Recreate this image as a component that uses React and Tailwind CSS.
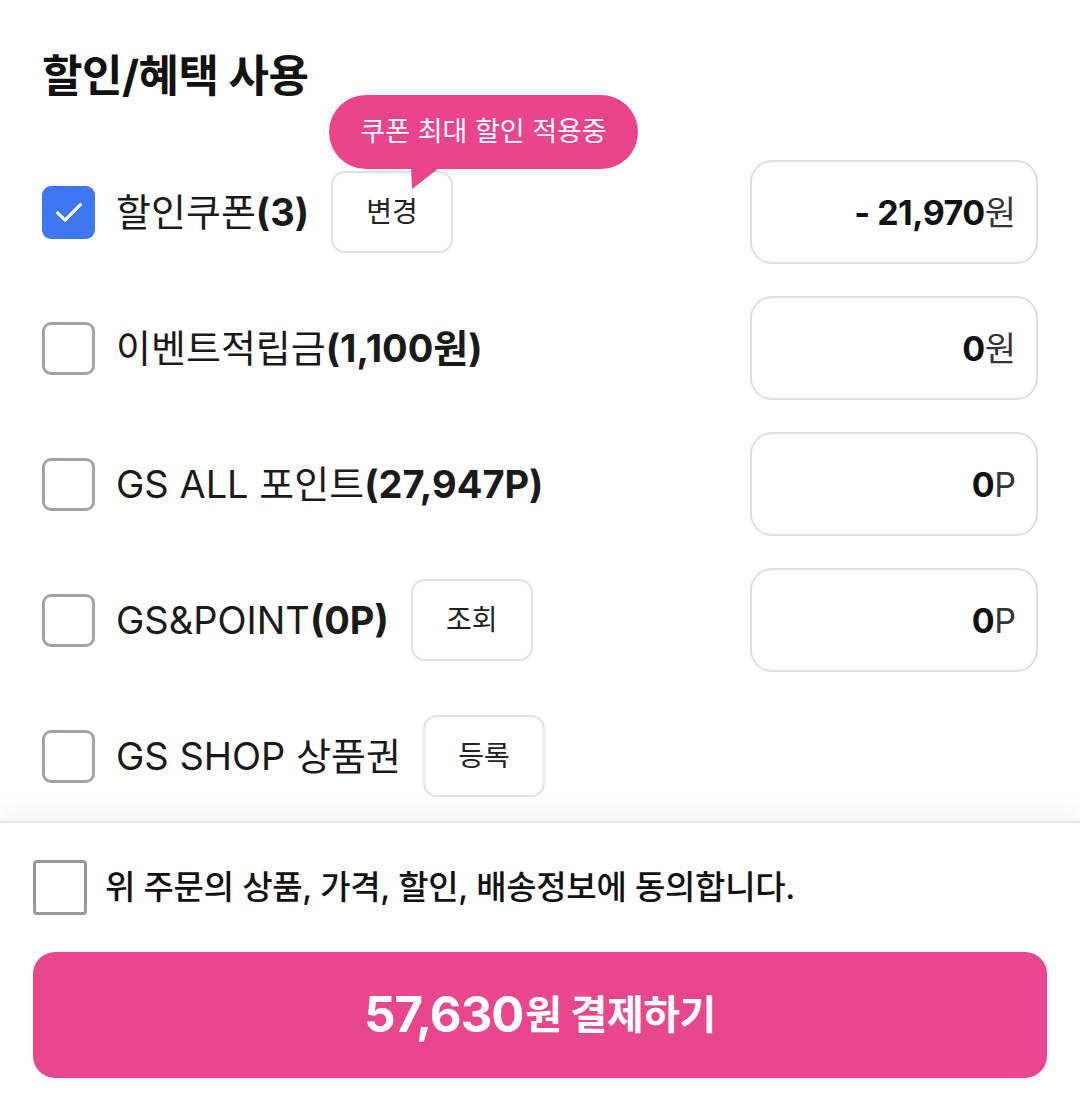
import React from "react";

const FONT = { fontFamily: '"Inter", "Noto Sans CJK KR", sans-serif' };

function Check({ checked }) {
  if (checked) {
    return (
      <div className="w-[53px] h-[53px] rounded-[9px] bg-[#3d78f2] flex items-center justify-center shrink-0">
        <svg width="38" height="38" viewBox="0 0 24 24" fill="none">
          <path d="M4.8 12.6l4.7 4.6L19.2 7.4" stroke="white" strokeWidth="2" strokeLinecap="round" strokeLinejoin="round" />
        </svg>
      </div>
    );
  }
  return <div className="w-[53px] h-[53px] rounded-[9px] border-[3px] border-[#a2a2ad] bg-white shrink-0" />;
}

function SmallBtn({ children, className = "" }) {
  return (
    <div className={"h-[82px] w-[122px] rounded-[14px] border-2 border-[#e2e2e6] bg-white flex items-center justify-center text-[28px] text-[#222] shrink-0 " + className}>
      {children}
    </div>
  );
}

function ValueBox({ bold, unit }) {
  return (
    <div className="w-[288px] h-[104px] rounded-[22px] border-2 border-[#dedee3] bg-white flex items-center justify-end pr-[20px] shrink-0">
      <span className="text-[34px] font-bold text-[#111] tracking-[-0.5px]">{bold}</span>
      <span className="text-[34px] text-[#333]">{unit}</span>
    </div>
  );
}

export default function App() {
  return (
    <div className="w-[1080px] h-[1097px] bg-white flex flex-col text-[#1a1a1a]" style={FONT}>
      <div className="px-[42px] pt-[46px] pb-[13px] flex flex-col">
        <h1 className="text-[44px] font-bold leading-[60px] tracking-[-0.5px] text-[#111]">할인/혜택 사용</h1>
        <div className="mt-[54px] flex flex-col gap-[32px]">
          {/* Row 1 */}
          <div className="h-[104px] flex items-center justify-between">
            <div className="flex items-center">
              <Check checked />
              <span className="ml-[21px] text-[38px]">
                할인쿠폰<span className="font-bold">(3)</span>
              </span>
              <div className="relative ml-[22px]">
                <SmallBtn>변경</SmallBtn>
                <div className="absolute left-[-2px] bottom-[84px] h-[74px] w-[309px] rounded-full bg-[#e9448c] flex items-center justify-center text-white text-[27px] whitespace-nowrap">
                  쿠폰 최대 할인 적용중
                  <svg className="absolute left-[80px] top-[70px]" width="34" height="26" viewBox="0 0 34 26">
                    <path d="M2 0 L34 0 L3 24 Z" fill="#e9448c" />
                  </svg>
                </div>
              </div>
            </div>
            <ValueBox bold="- 21,970" unit="원" />
          </div>
          {/* Row 2 */}
          <div className="h-[104px] flex items-center justify-between">
            <div className="flex items-center">
              <Check />
              <span className="ml-[21px] text-[38px]">
                이벤트적립금<span className="font-bold">(1,100원)</span>
              </span>
            </div>
            <ValueBox bold="0" unit="원" />
          </div>
          {/* Row 3 */}
          <div className="h-[104px] flex items-center justify-between">
            <div className="flex items-center">
              <Check />
              <span className="ml-[21px] text-[38px]">
                GS ALL 포인트<span className="font-bold">(27,947P)</span>
              </span>
            </div>
            <ValueBox bold="0" unit="P" />
          </div>
          {/* Row 4 */}
          <div className="h-[104px] flex items-center justify-between">
            <div className="flex items-center">
              <Check />
              <span className="ml-[21px] text-[38px]">
                GS&amp;POINT<span className="font-bold">(0P)</span>
              </span>
              <SmallBtn className="ml-[22px]">조회</SmallBtn>
            </div>
            <ValueBox bold="0" unit="P" />
          </div>
          {/* Row 5 */}
          <div className="h-[104px] flex items-center">
            <Check />
            <span className="ml-[21px] text-[38px]">GS SHOP 상품권</span>
            <SmallBtn className="ml-[22px]">등록</SmallBtn>
          </div>
        </div>
      </div>
      <div className="flex-1 border-t-2 border-[#e6e6e6] shadow-[0_-14px_18px_rgba(0,0,0,0.035)] bg-white px-[33px] pt-[37px] flex flex-col">
        <div className="flex items-center">
          <div className="w-[54px] h-[55px] rounded-[4px] border-[3px] border-[#9a9a9a] bg-white shrink-0" />
          <span className="ml-[18px] text-[33px] font-medium tracking-[-0.3px] text-[#111]">
            위 주문의 상품, 가격, 할인, 배송정보에 동의합니다.
          </span>
        </div>
        <div className="mt-[37px] h-[126px] w-[1014px] rounded-[22px] bg-[#e8478f] flex items-center justify-center text-white">
          <span className="text-[49px] font-bold tracking-[-1px]">57,630</span>
          <span className="text-[40px] font-bold tracking-[-0.5px] ml-[2px]">원 결제하기</span>
        </div>
      </div>
    </div>
  );
}
